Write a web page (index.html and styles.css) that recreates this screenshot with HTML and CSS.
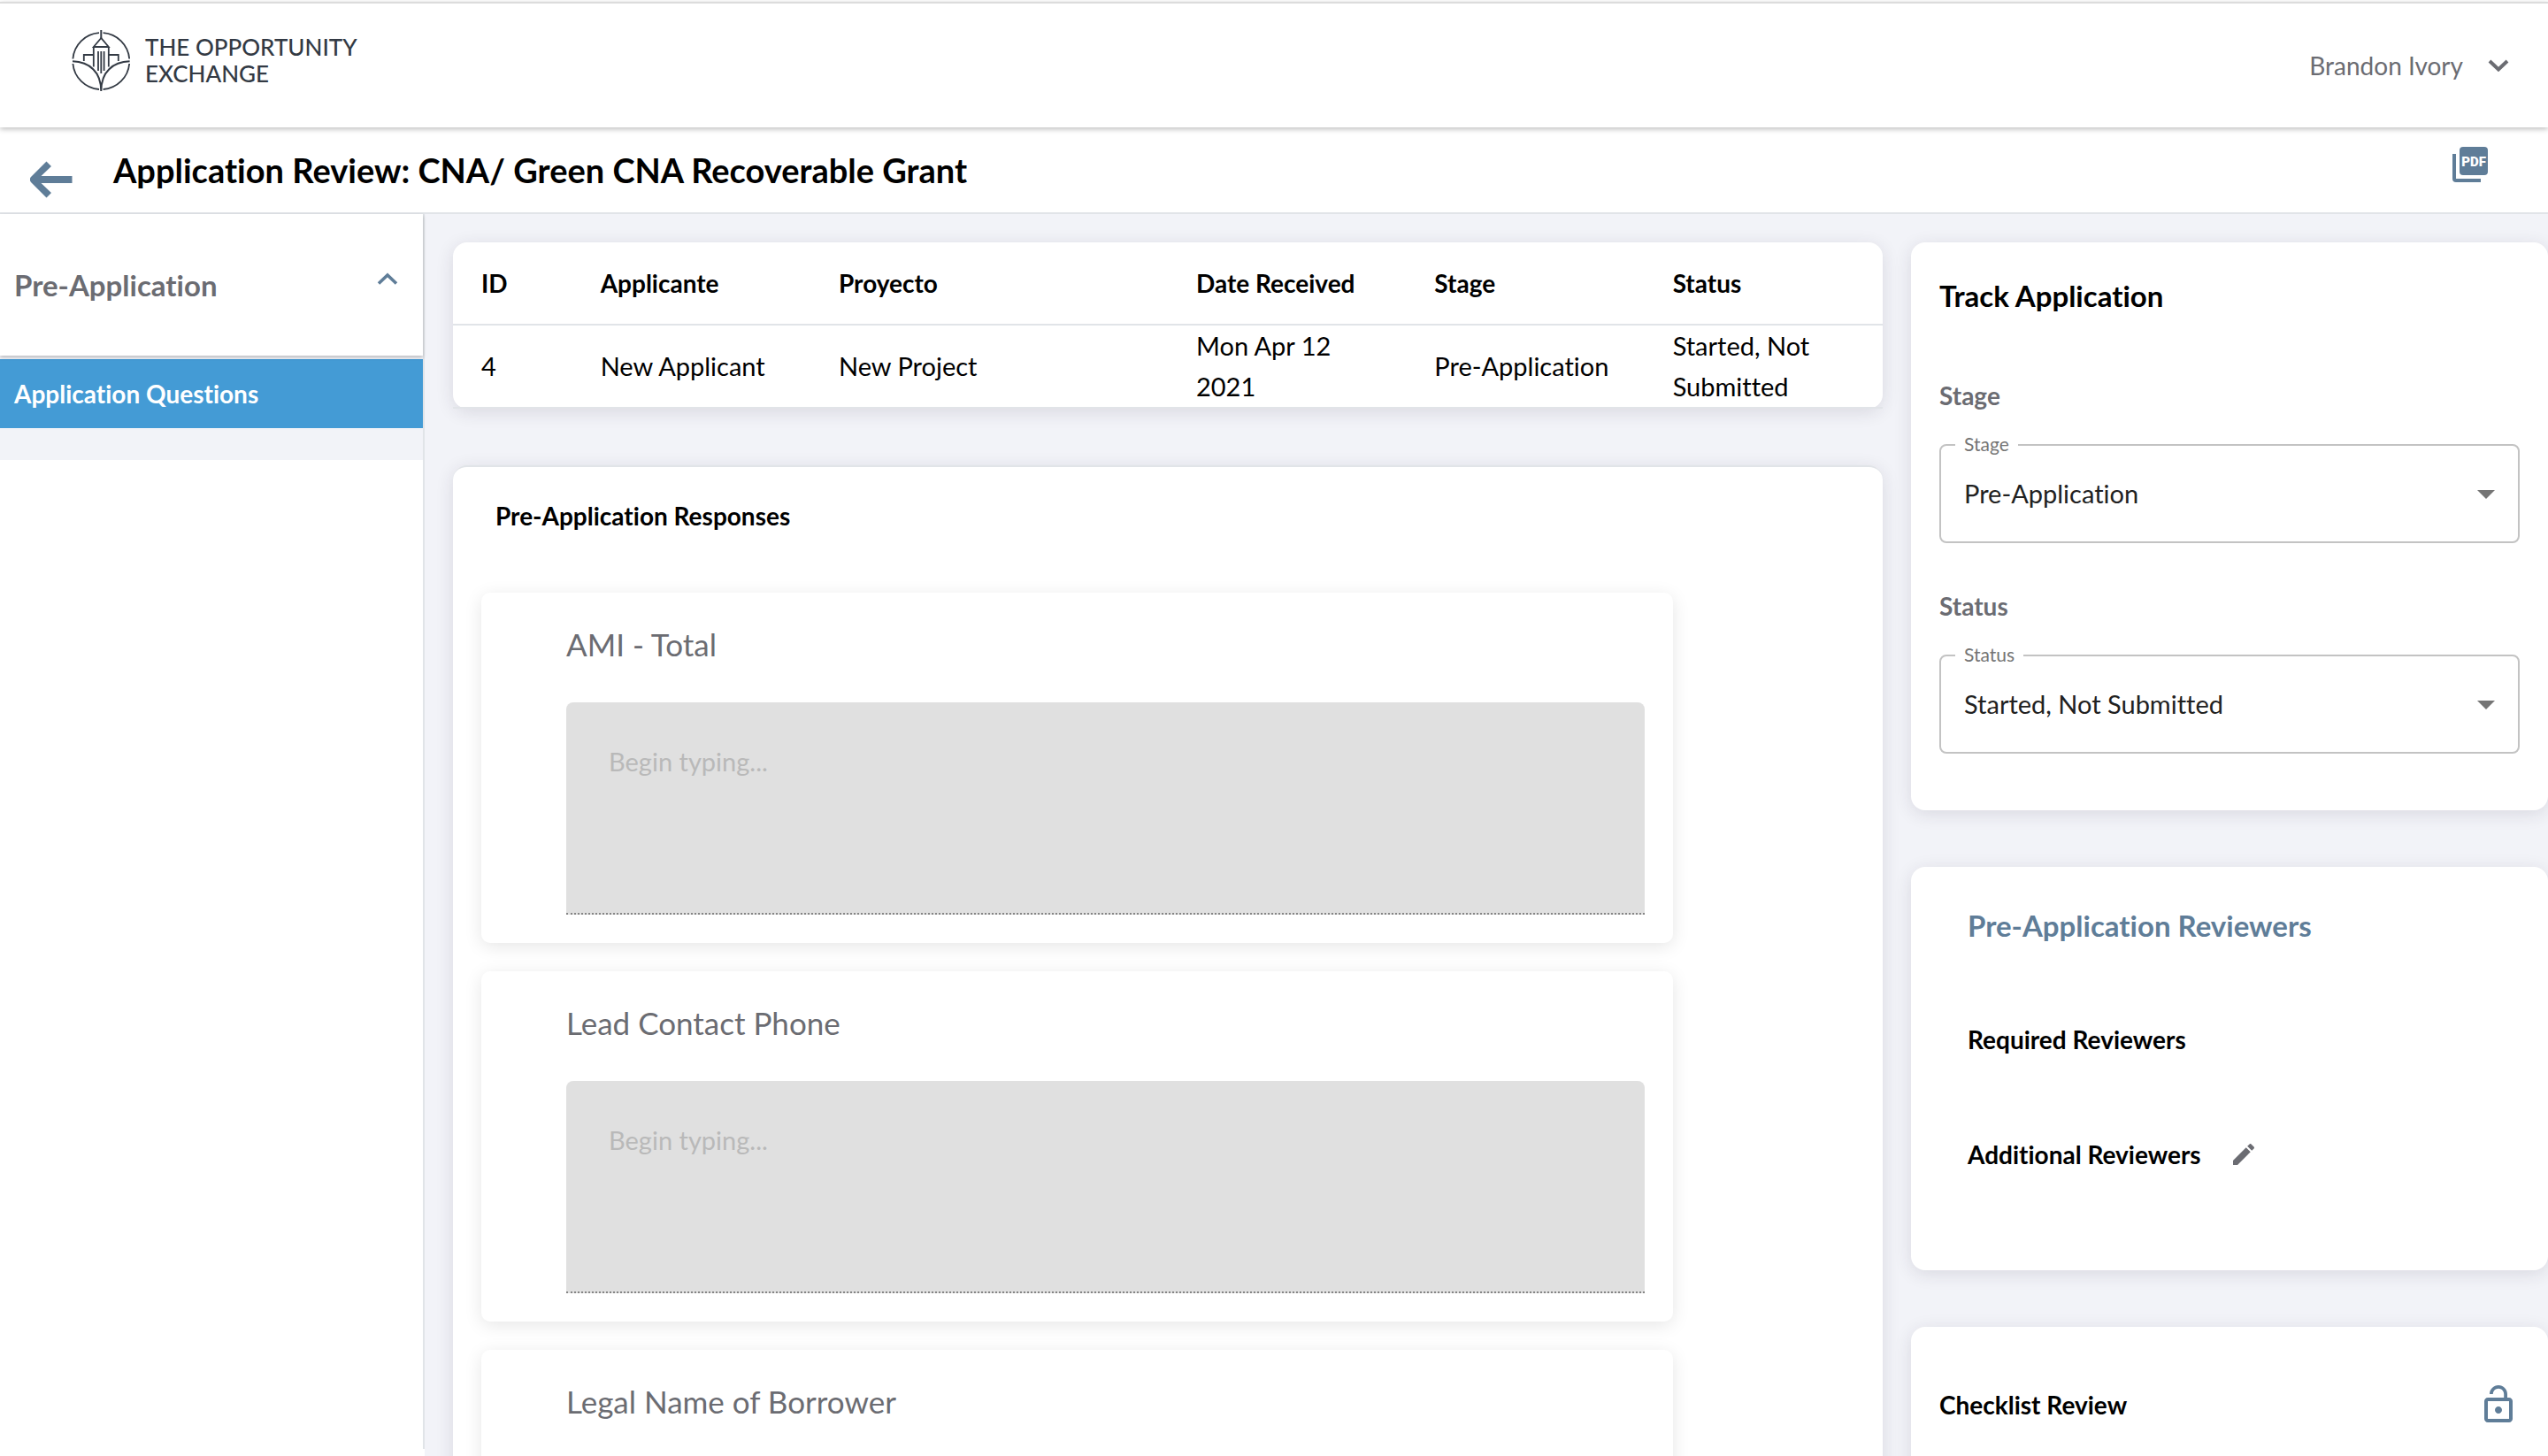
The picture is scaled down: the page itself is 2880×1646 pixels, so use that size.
FILE: index.html
```html
<!DOCTYPE html>
<html lang="en">
<head>
<meta charset="utf-8">
<meta name="viewport" content="width=device-width, initial-scale=1">
<title>Application Review</title>
<link rel="stylesheet" href="styles.css">
</head>
<body>
<div class="app">
  <header class="site-header">
    <a class="logo" href="#">
      <svg class="logo-mark" viewBox="0 0 68 70" fill="none" stroke="#333a44" stroke-width="1.8" aria-hidden="true">
        <path d="M32 3.2A32 32 0 0 0 2.4 32.5M36.6 3.2A32 32 0 0 1 66.2 32.5M2.4 38A32 32 0 0 0 32 67M66.2 38A32 32 0 0 1 36.600 67"/>
        <path d="M34.300 0V9" stroke-width="2"/>
        <path d="M34.300 9L25.800 19H42.800ZM25.800 19V41.500M42.800 19V41.500M14.800 35V28H25.800M53.800 35V28H42.800M31 24V46M34.300 24V49M37.600 24V46"/>
        <path d="M2 35.300C21 36 34.300 47 34.300 69C34.300 47 47.600 36 66.600 35.300" stroke-width="2"/>
      </svg>
      <span class="logo-text">THE OPPORTUNITY<br>EXCHANGE</span>
    </a>
    <button class="user-menu" type="button">
      Brandon Ivory
      <svg class="user-chevron" viewBox="0 0 24 14" aria-hidden="true"><path d="M2 2L12 11.500L22 2" fill="none" stroke="currentColor" stroke-width="4"/></svg>
    </button>
  </header>

  <div class="title-bar">
    <a class="back" href="#" aria-label="Back">
      <svg viewBox="0 0 48 42" aria-hidden="true"><path d="M18.500 0.500L24 6L12.500 17H47.500V25H12.500L24 36L18.500 41.500L1 24Q-1.500 21 1 18Z" fill="currentColor"/></svg>
    </a>
    <h1 class="title">Application Review: CNA/ Green CNA Recoverable Grant</h1>
    <button class="icon-button pdf" type="button" aria-label="Export PDF">
      <svg class="icon" viewBox="0 0 48 48" aria-hidden="true">
        <path d="M6 12V40a2 2 0 0 0 2 2H36" fill="none" stroke="currentColor" stroke-width="4"/>
        <rect x="12" y="4" width="32" height="32" rx="4" fill="currentColor"/>
        <text class="pdf-label" x="28" y="26" text-anchor="middle">PDF</text>
      </svg>
    </button>
  </div>

  <div class="body">
    <nav class="sidebar">
      <button class="section-toggle" type="button" aria-expanded="true">
        Pre-Application
        <svg class="section-chevron" viewBox="0 0 24 14" aria-hidden="true"><path d="M2 12.500L12 3L22 12.500" fill="none" stroke="#5f7d98" stroke-width="3.600"/></svg>
      </button>
      <div class="section-items">
        <a class="section-link" href="#">Application Questions</a>
      </div>
    </nav>

    <main class="content">
      <div class="column">
        <section class="card">
          <table class="summary">
            <colgroup><col class="c1"><col class="c2"><col class="c3"><col class="c2"><col class="c2"><col class="c2"></colgroup>
            <thead>
              <tr><th>ID</th><th>Applicante</th><th>Proyecto</th><th>Date Received</th><th>Stage</th><th>Status</th></tr>
            </thead>
            <tbody>
              <tr><td>4</td><td>New Applicant</td><td>New Project</td><td>Mon Apr 12 2021</td><td>Pre-Application</td><td>Started, Not Submitted</td></tr>
            </tbody>
          </table>
        </section>

        <section class="card responses">
          <h2 class="label responses-title">Pre-Application Responses</h2>
          <div class="question">
            <label class="question-title" for="q1">AMI - Total</label>
            <textarea class="answer" id="q1" placeholder="Begin typing..." disabled></textarea>
          </div>
          <div class="question">
            <label class="question-title" for="q2">Lead Contact Phone</label>
            <textarea class="answer" id="q2" placeholder="Begin typing..." disabled></textarea>
          </div>
          <div class="question">
            <label class="question-title" for="q3">Legal Name of Borrower</label>
            <textarea class="answer" id="q3" placeholder="Begin typing..." disabled></textarea>
          </div>
        </section>
      </div>

      <aside class="column">
        <section class="card track">
          <h2 class="heading">Track Application</h2>
          <h3 class="label muted">Stage</h3>
          <div class="select-field">
            <select class="select" id="stage"><option>Pre-Application</option></select>
            <label class="float-label" for="stage">Stage</label>
            <svg class="caret" viewBox="0 0 20 10" aria-hidden="true"><path d="M0 0H20L10 10Z" fill="#757575"/></svg>
          </div>
          <h3 class="label muted">Status</h3>
          <div class="select-field">
            <select class="select" id="status"><option>Started, Not Submitted</option></select>
            <label class="float-label" for="status">Status</label>
            <svg class="caret" viewBox="0 0 20 10" aria-hidden="true"><path d="M0 0H20L10 10Z" fill="#757575"/></svg>
          </div>
        </section>

        <section class="card reviewers">
          <h2 class="heading accent">Pre-Application Reviewers</h2>
          <h3 class="label required">Required Reviewers</h3>
          <div class="additional">
            <h3 class="label">Additional Reviewers</h3>
            <button class="icon-button edit" type="button" aria-label="Edit additional reviewers">
              <svg class="icon-small" viewBox="0 0 24 24" aria-hidden="true"><path fill="currentColor" d="M3 17.250V21h3.750L17.810 9.940l-3.750-3.750L3 17.250zM20.710 7.040c.39-.39.39-1.020 0-1.410l-2.340-2.340c-.39-.39-1.020-.39-1.410 0l-1.830 1.830 3.750 3.750 1.830-1.830z"/></svg>
            </button>
          </div>
        </section>

        <section class="card checklist">
          <h2 class="label">Checklist Review</h2>
          <button class="icon-button" type="button" aria-label="Unlocked">
            <svg class="icon" viewBox="0 0 24 24" aria-hidden="true"><path fill="currentColor" d="M12 17c1.100 0 2-.9 2-2s-.9-2-2-2-2 .9-2 2 .9 2 2 2zm6-9h-1V6c0-2.760-2.240-5-5-5S7 3.240 7 6h1.900c0-1.710 1.390-3.100 3.100-3.100 1.710 0 3.100 1.390 3.100 3.100v2H6c-1.100 0-2 .9-2 2v10c0 1.100.9 2 2 2h12c1.100 0 2-.9 2-2V10c0-1.100-.9-2-2-2zm0 12H6V10h12v10z"/></svg>
          </button>
        </section>
      </aside>
    </main>
  </div>
</div>
</body>
</html>
```
FILE: styles.css
```css
:root {
  --ink: #000;
  --muted: #6b6c72;
  --accent: #5f7d98;
  --line: #e1e4e8;
  --page: #f2f3f8;
}

* {
  box-sizing: border-box;
}

body,
h1,
h2,
h3 {
  margin: 0;
}

body {
  font-family: Lato, "Liberation Sans", sans-serif;
  font-size: 28px;
  font-variant-ligatures: none;
  line-height: 34px;
  color: var(--ink);
  background: #fff;
}

button {
  padding: 0;
  border: 0;
  background: none;
  font: inherit;
  font-variant-ligatures: none;
  color: inherit;
}

a {
  color: inherit;
  text-decoration: none;
}

svg {
  display: block;
  flex: none;
}

.app {
  display: flex;
  flex-direction: column;
  height: 100vh;
  overflow: hidden;
}

/* Header */
.site-header {
  position: relative;
  z-index: 1;
  display: flex;
  align-items: center;
  justify-content: space-between;
  margin-top: 2px;
  padding: 30px 44px 30px 80px;
  border-top: 2px solid #dcdcdc;
  background: #fff;
  box-shadow: 0 2px 6px rgba(0, 0, 0, 0.26);
}

.logo {
  display: flex;
  align-items: center;
  gap: 16px;
  margin-bottom: 12px;
  color: #333a44;
}

.logo-mark {
  width: 68px;
  height: 70px;
  margin-bottom: -2px;
}

.logo-text {
  font-size: 26px;
  font-weight: 500;
  line-height: 30px;
}

.user-menu {
  display: flex;
  align-items: center;
  gap: 28px;
  color: var(--muted);
}

.user-chevron {
  width: 24px;
  height: 14px;
}

/* Title bar */
.title-bar {
  display: flex;
  align-items: center;
  padding: 24px 64px 24px 34px;
  border-bottom: 2px solid var(--line);
  color: var(--accent);
}

.back {
  margin: 14px 0 -8px;
}

.back svg {
  width: 48px;
  height: 42px;
}

.title {
  flex: 1;
  padding-left: 46px;
  font-size: 38px;
  line-height: 48px;
  color: var(--ink);
}

.icon {
  width: 48px;
  height: 48px;
}

.icon-small {
  width: 32px;
  height: 32px;
}

.icon-button {
  color: var(--accent);
}

.pdf {
  margin: -12px 0 0;
}

.pdf-label {
  font: 900 15px Roboto, sans-serif;
  fill: #fff;
}

/* Body */
.body {
  flex: 1;
  min-height: 0;
  display: grid;
  grid-template-columns: minmax(0, 1fr) minmax(0, 5fr);
}

.sidebar {
  margin-bottom: 8px;
  border-right: 2px solid var(--line);
  background: #fff;
}

.section-toggle {
  position: relative;
  display: flex;
  align-items: center;
  justify-content: space-between;
  width: 100%;
  padding: 60px 28px 60px 16px;
  background: #fff;
  box-shadow: 0 2px 4px rgba(0, 0, 0, 0.24);
  font-size: 33px;
  font-weight: 700;
  line-height: 40px;
  color: var(--muted);
}

.section-chevron {
  width: 24px;
  height: 14px;
  margin-bottom: 14px;
}

.section-items {
  padding: 4px 0 36px;
  background: var(--page);
}

.section-link {
  display: block;
  padding: 22px 16px;
  background: #449bd5;
  font-weight: 700;
  color: #fff;
}

.content {
  display: grid;
  grid-template-columns: minmax(0, 101fr) minmax(0, 45fr);
  gap: 32px;
  min-height: 0;
  overflow: hidden;
  padding: 32px 0 0 32px;
  background: var(--page);
}

.column {
  display: flex;
  flex-direction: column;
  gap: 64px;
}

.card {
  flex: none;
  border-radius: 16px;
  background: #fff;
  box-shadow: 0 4px 20px rgba(40, 30, 60, 0.12);
}

/* Summary table */
.summary {
  width: 100%;
  table-layout: fixed;
  border-collapse: separate;
  border-spacing: 0;
  line-height: 46px;
  text-align: left;
}

.c1 {
  width: 8.3333%;
}

.c2 {
  width: 16.6667%;
}

.c3 {
  width: 25%;
}

.summary th,
.summary td {
  padding: 0 0 0 32px;
  border-bottom: 2px solid var(--line);
}

.summary th {
  padding: 23px 0 23px 32px;
}

.summary td {
  font-size: 29px;
}

.summary td:nth-child(4),
.summary td:nth-child(6) {
  padding-right: 56px;
}

/* Responses */
.responses {
  display: flex;
  flex-direction: column;
  gap: 32px;
  padding: 38px 32px;
  border-top: 2px solid var(--line);
}

.responses-title {
  padding: 0 16px 38px;
}

.label {
  font-size: 28px;
  line-height: 34px;
}

.question {
  display: flex;
  flex-direction: column;
  gap: 44px;
  width: calc((100% + 64px) * 10 / 12);
  padding: 36px 32px 32px 96px;
  border-radius: 10px;
  box-shadow: 0 4px 20px rgba(0, 0, 0, 0.1);
}

.question-title {
  font-size: 35px;
  line-height: 44px;
  color: var(--muted);
}

.answer {
  display: block;
  width: 100%;
  height: 240px;
  padding: 50px 48px;
  border: 0;
  border-bottom: 2px dotted #858585;
  border-radius: 8px 8px 0 0;
  background: #e0e0e0;
  font: inherit;
  font-size: 29px;
  resize: none;
}

.answer::placeholder {
  color: #b9b9b9;
}

/* Right column */
.heading {
  font-size: 33px;
  line-height: 40px;
}

.muted {
  color: var(--muted);
}

.accent {
  color: var(--accent);
}

.track {
  padding: 40px 32px 64px;
}

.track .heading {
  margin-bottom: 76px;
}

.track .label {
  margin-bottom: 38px;
}

.select-field {
  position: relative;
}

.select-field + .label {
  margin-top: 54px;
}

.select {
  display: block;
  width: 100%;
  height: 112px;
  padding: 0 56px 0 26px;
  border: 2px solid #c3c3c3;
  border-radius: 8px;
  appearance: none;
  background: #fff;
  font: inherit;
  font-size: 29px;
  font-variant-ligatures: none;
  color: #212121;
}

.float-label {
  position: absolute;
  top: -12px;
  left: 18px;
  padding: 0 10px;
  background: #fff;
  font-size: 21px;
  line-height: 24px;
  color: #757575;
}

.caret {
  position: absolute;
  top: 52px;
  right: 28px;
  width: 20px;
  height: 10px;
  pointer-events: none;
}

.reviewers {
  padding: 46px 64px 114px;
}

.required {
  margin: 92px 0 96px;
}

.additional {
  display: flex;
  align-items: center;
  gap: 32px;
}

.edit {
  color: var(--muted);
}

.checklist {
  display: flex;
  align-items: center;
  justify-content: space-between;
  padding: 64px 32px;
}
```
